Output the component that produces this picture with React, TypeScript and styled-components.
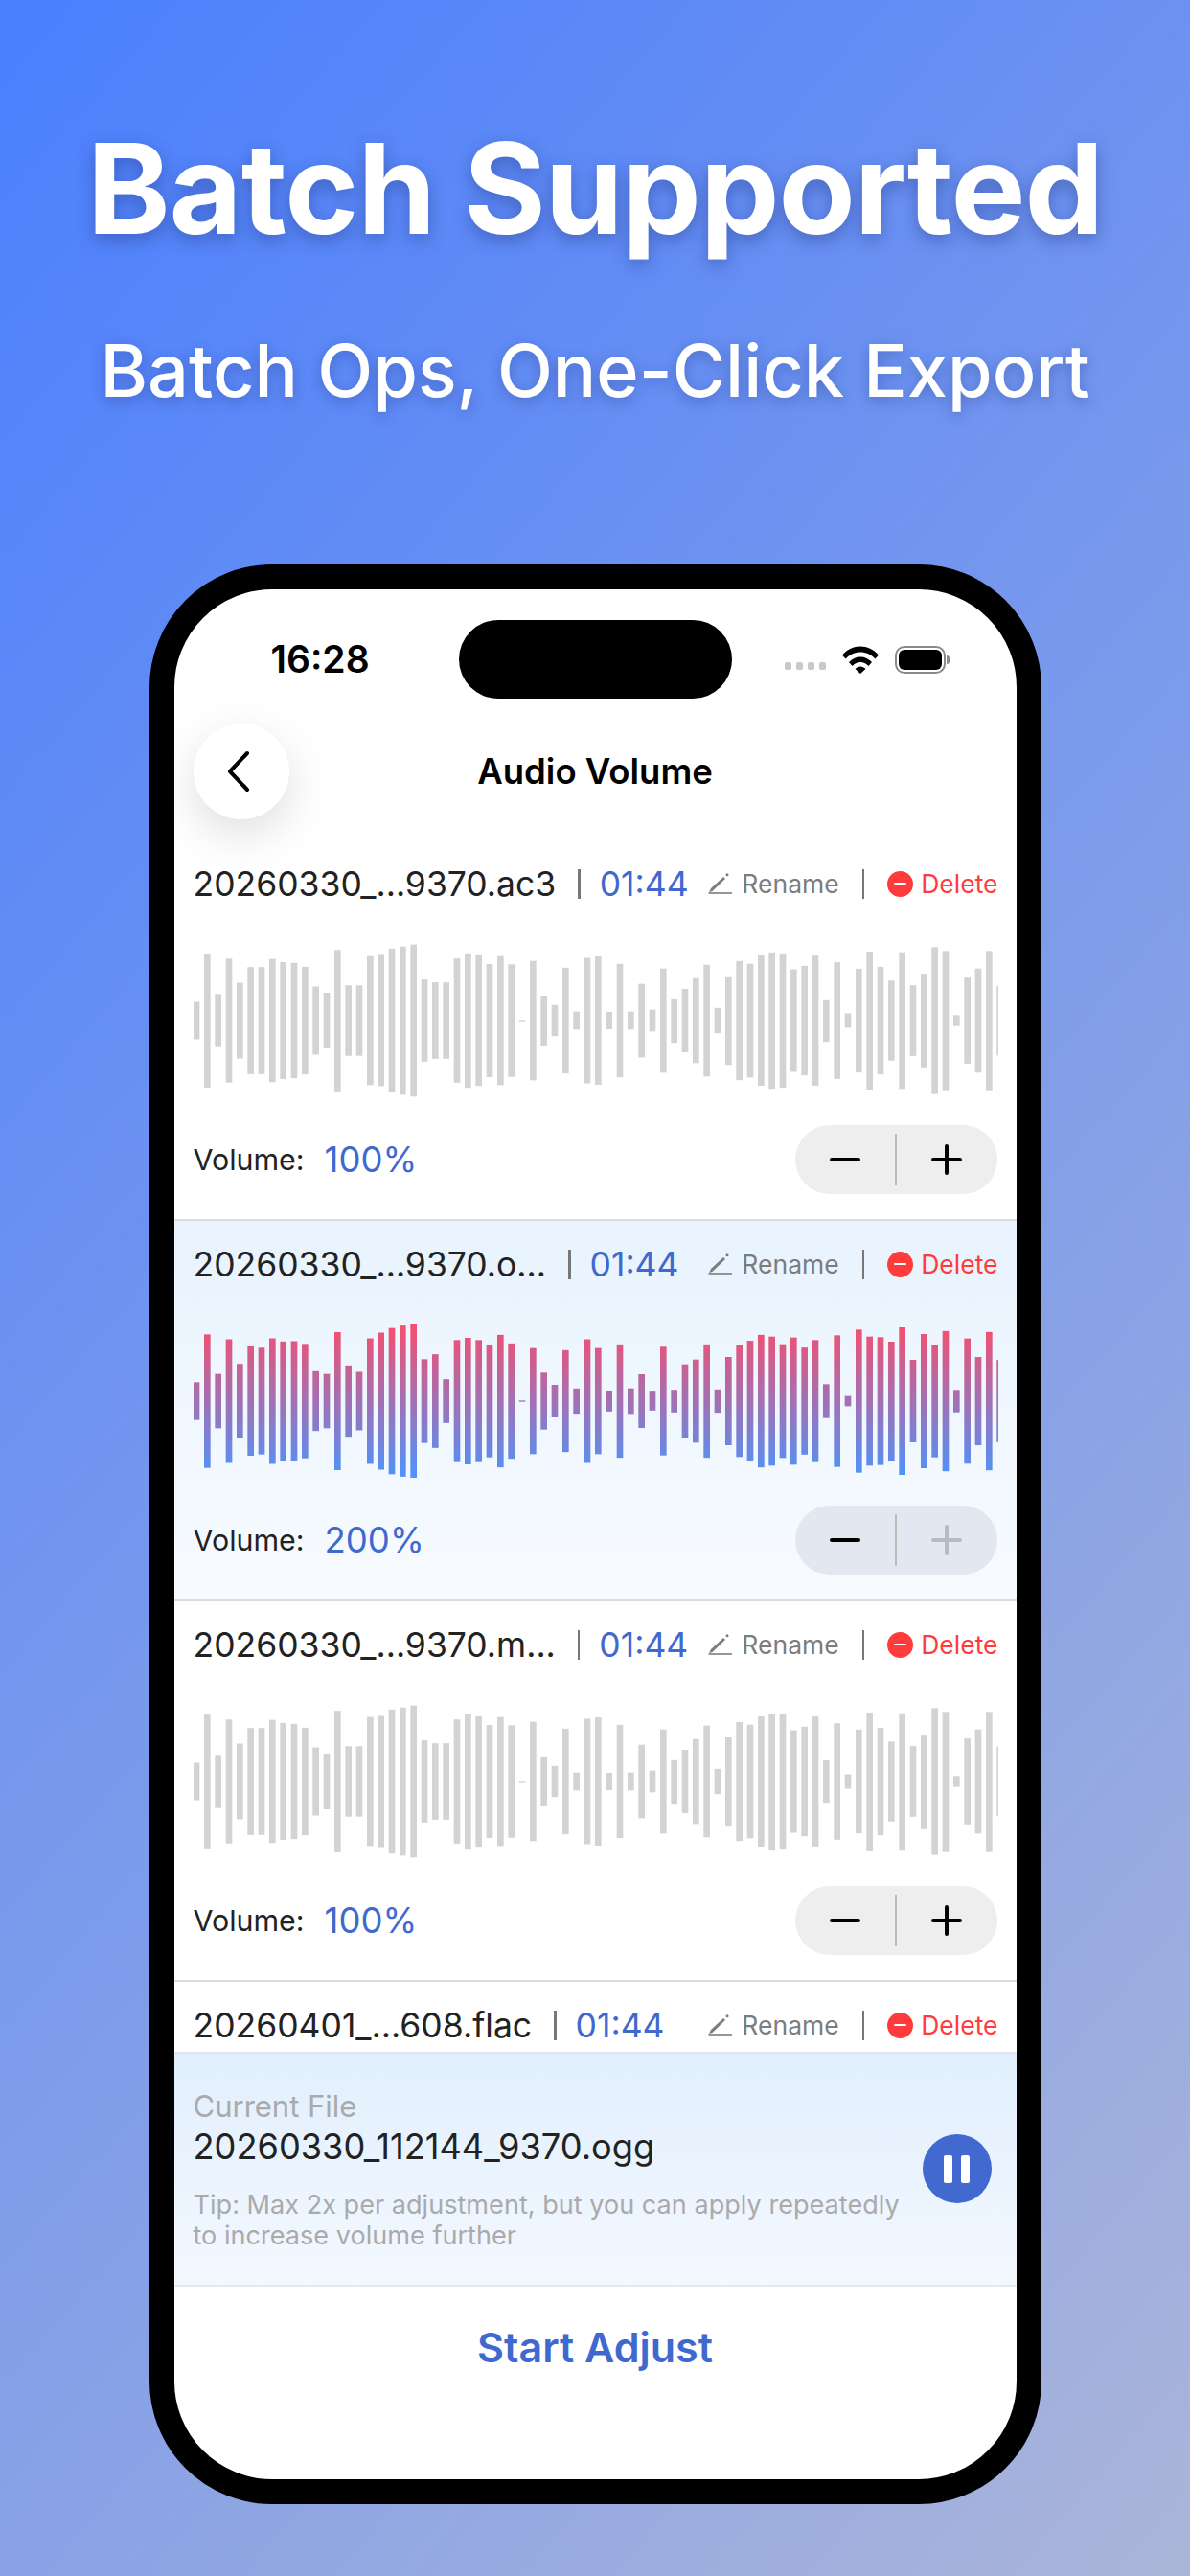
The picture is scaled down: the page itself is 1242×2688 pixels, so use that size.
import React from 'react'
import styled, {createGlobalStyle} from 'styled-components'

const GRAY_BARS = [
    117, 419, 166, 388, 237, 335, 335, 386, 366, 361, 337, 213, 174, 443, 220, 220, 404, 411, 451, 464, 476, 257, 239, 239, 389,
    421, 409, 354, 404, 352, 4, 374, 156, 97, 331, 56, 393, 402, 54, 355, 56, 230, 68, 326, 139, 198, 266, 350, 79, 277,
    373, 356, 408, 427, 421, 321, 343, 407, 133, 365, 45, 325, 432, 337, 250, 428, 221, 293, 460, 436, 34, 269, 326, 436, 218,
]

const ACTIVE_BARS = [
    118, 418, 170, 387, 233, 342, 334, 393, 373, 375, 358, 187, 170, 432, 223, 183, 393, 429, 458, 473, 480, 262, 293, 137, 382,
    396, 382, 352, 415, 361, 4, 332, 178, 102, 319, 79, 387, 332, 65, 355, 80, 168, 59, 340, 71, 230, 260, 355, 73, 276,
    350, 378, 415, 404, 356, 398, 335, 382, 106, 412, 32, 448, 404, 400, 372, 462, 258, 420, 352, 439, 70, 392, 276, 433, 257,
]

interface IAudioFile {
    name: string
    duration: string
    volume: number
    active?: boolean
    partial?: boolean
}

const FILES: IAudioFile[] = [
    {name: '20260330_...9370.ac3', duration: '01:44', volume: 100},
    {name: '20260330_...9370.o...', duration: '01:44', volume: 200, active: true},
    {name: '20260330_...9370.m...', duration: '01:44', volume: 100},
    {name: '20260401_...608.flac', duration: '01:44', volume: 100, partial: true},
]

const GlobalStyle = createGlobalStyle`
    html, body {
        margin: 0;
        padding: 0;
    }

    body {
        font-family: Inter, "Liberation Sans", sans-serif;
    }
`

const Page = styled.div`
    width: 1242px;
    height: 2688px;
    box-sizing: border-box;
    padding-top: 126px;
    display: flex;
    flex-direction: column;
    align-items: center;
    overflow: hidden;
    background: linear-gradient(131deg, #4a7ffe 0%, #abb5d9 100%);
`

const Headline = styled.h1`
    margin: 0;
    height: 142px;
    line-height: 142px;
    font-size: 131px;
    font-weight: 700;
    letter-spacing: -1px;
    color: #fff;
    white-space: nowrap;
    text-shadow: 0 6px 18px rgba(35, 55, 130, 0.45);
`

const Subhead = styled.h2`
    margin: 73px 0 0;
    height: 92px;
    line-height: 92px;
    font-size: 75.6px;
    font-weight: 500;
    color: #fff;
    white-space: nowrap;
    text-shadow: 0 4px 14px rgba(35, 55, 130, 0.4);
`

const Phone = styled.div`
    margin-top: 156px;
    width: 931px;
    height: 2024px;
    box-sizing: border-box;
    border: 26px solid #000;
    border-radius: 128px;
    background: #fff;
    overflow: hidden;
    display: flex;
    flex-direction: column;
`

const StatusBar = styled.div`
    flex: none;
    height: 140px;
    box-sizing: border-box;
    padding-top: 32px;
    display: grid;
    grid-template-columns: 1fr 285px 1fr;
    align-items: start;
`

const Clock = styled.div`
    padding-left: 101px;
    height: 82px;
    line-height: 82px;
    font-size: 39px;
    font-weight: 600;
    color: #000;
`

const Island = styled.div`
    height: 82px;
    border-radius: 41px;
    background: #000;
`

const StatusIcons = styled.div`
    height: 82px;
    display: flex;
    align-items: center;
    padding-left: 55px;
`

const SignalDots = styled.div`
    display: flex;
    gap: 5px;
    margin: 14px 17px 0 0;
`

const SignalDot = styled.span`
    width: 7px;
    height: 8px;
    border-radius: 2px;
    background: #c9c9c9;
`

const Battery = styled.div`
    position: relative;
    margin-left: 17px;
    width: 53px;
    height: 29px;
    box-sizing: border-box;
    border: 2px solid #8a8a8a;
    border-radius: 10px;
    padding: 2px;

    &::before {
        content: '';
        display: block;
        height: 100%;
        border-radius: 6px;
        background: #000;
    }

    &::after {
        content: '';
        position: absolute;
        right: -6px;
        top: 8px;
        width: 3px;
        height: 9px;
        border-radius: 0 3px 3px 0;
        background: #8a8a8a;
    }
`

const NavBar = styled.div`
    flex: none;
    position: relative;
    z-index: 2;
    height: 100px;
    margin-bottom: 22px;
    padding: 0 20px;
    display: grid;
    grid-template-columns: 100px 1fr 100px;
    align-items: center;
`

const BackButton = styled.button`
    width: 100px;
    height: 100px;
    padding: 0 5px 0 0;
    border: 0;
    border-radius: 50%;
    background: #fff;
    box-shadow: 0 16px 48px rgba(0, 0, 0, 0.13);
    display: flex;
    align-items: center;
    justify-content: center;
`

const NavTitle = styled.div`
    text-align: center;
    font-size: 36.5px;
    font-weight: 600;
    color: #000;
`

const FileList = styled.div`
    flex: 1;
    min-height: 0;
    overflow: hidden;
`

const Row = styled.div<{ $active?: boolean }>`
    height: 397px;
    box-sizing: border-box;
    padding: 23px 20px 0;
    border-bottom: 2px solid #dcdcdc;
    background: ${({$active}) => ($active ? 'linear-gradient(180deg, #e8f3fe 0%, #f8fbff 100%)' : '#fff')};
`

const RowHeader = styled.div`
    height: 44px;
    margin-right: -1px;
    display: flex;
    align-items: center;
`

const FileName = styled.span`
    font-size: 35.5px;
    color: #222;
    white-space: nowrap;
`

const Duration = styled.span`
    font-size: 35.5px;
    color: #3f69cf;
`

const Pipe = styled.span<{ $before: number; $after: number }>`
    flex: none;
    width: 2.5px;
    height: 31px;
    margin: 0 ${({$after}) => $after}px 0 ${({$before}) => $before}px;
    background: #777;
`

const Actions = styled.div`
    margin-left: auto;
    display: flex;
    align-items: center;
`

const ActionText = styled.span<{ $danger?: boolean }>`
    font-size: 26.5px;
    color: ${({$danger}) => ($danger ? '#ff3b3b' : '#7c7c7c')};
`

const RenameGroup = styled.div`
    display: flex;
    align-items: center;
    gap: 9px;
`

const DeleteGroup = styled.div`
    display: flex;
    align-items: center;
    gap: 8px;
`

const DeleteDot = styled.span`
    width: 27px;
    height: 27px;
    border-radius: 50%;
    background: #ff3b3b;
    display: flex;
    align-items: center;
    justify-content: center;

    &::before {
        content: '';
        width: 13px;
        height: 2.5px;
        border-radius: 1px;
        background: #fff;
    }
`

const Wave = styled.svg`
    display: block;
    margin-top: 36px;
    width: 840px;
    height: 170px;
`

const VolumeRow = styled.div`
    margin-top: 24px;
    height: 72px;
    display: flex;
    align-items: center;
`

const VolumeLabel = styled.span`
    font-size: 30.4px;
    color: #222;
`

const VolumeValue = styled.span`
    margin-left: 21px;
    font-size: 36.5px;
    color: #3f69cf;
`

const Stepper = styled.div<{ $active?: boolean }>`
    margin-left: auto;
    width: 211px;
    height: 72px;
    border-radius: 36px;
    background: ${({$active}) => ($active ? '#e3e7ef' : '#eeeeee')};
    display: flex;
    align-items: center;
`

const StepButton = styled.div`
    flex: 1;
    display: flex;
    align-items: center;
    justify-content: center;
`

const StepDivider = styled.span`
    flex: none;
    width: 2px;
    height: 54px;
    background: #bbbbbb;
`

const NowPlaying = styled.div`
    flex: none;
    position: relative;
    height: 245px;
    box-sizing: border-box;
    padding: 35px 20px 0;
    border-top: 2px solid #dbe6f1;
    border-bottom: 2px solid #e6e8eb;
    background: linear-gradient(180deg, #e1effd 0%, #f3f8ff 100%);
`

const CurrentLabel = styled.div`
    height: 40px;
    line-height: 40px;
    font-size: 31px;
    color: #aaaaaa;
`

const CurrentName = styled.div`
    height: 44px;
    line-height: 44px;
    font-size: 36.2px;
    color: #222;
`

const Tip = styled.div`
    margin-top: 23px;
    width: 760px;
    font-size: 27.1px;
    line-height: 32px;
    color: #aaaaaa;
`

const PauseButton = styled.button`
    position: absolute;
    right: 26px;
    top: 84px;
    width: 72px;
    height: 72px;
    padding: 0;
    border: 0;
    border-radius: 50%;
    background: #4169cf;
    display: flex;
    align-items: center;
    justify-content: center;
    gap: 9px;
`

const PauseBar = styled.span`
    width: 9px;
    height: 29px;
    border-radius: 2px;
    background: #fff;
`

const BottomBar = styled.div`
    flex: none;
    height: 201px;
    box-sizing: border-box;
    padding-top: 31px;
    text-align: center;
    font-size: 43px;
    line-height: 64px;
    font-weight: 600;
    color: #3f69cf;
`

const Waveform: React.FC<{ bars: number[]; active?: boolean; id: string }> = ({bars, active, id}) => (
    <Wave viewBox="0 0 840 170">
        <defs>
            <linearGradient id={id} gradientUnits="userSpaceOnUse" x1="0" y1="5" x2="0" y2="165">
                <stop offset="0" stopColor="#f83c5c"/>
                <stop offset="1" stopColor="#3a89fb"/>
            </linearGradient>
        </defs>
        {bars.map((h, i) => (
            <rect
                key={i}
                x={i * 11.333 - 0.33}
                y={85 - h / 6}
                width={6.67}
                height={h / 3}
                fill={active ? `url(#${id})` : '#d3d3d5'}
                fillOpacity={active ? 0.9 : 1}
            />
        ))}
    </Wave>
)

const PencilIcon = () => (
    <svg width="26" height="22" viewBox="0 0 26 22">
        <path d="M0.5 21h24.5" stroke="#7c7c7c" strokeWidth="1.6"/>
        <path d="M1 20.5 L3 16 L16 4 L18 6 L5 18.5 Z" fill="#7c7c7c"/>
        <circle cx="20" cy="1.8" r="1.5" fill="#7c7c7c"/>
    </svg>
)

const StepIcon: React.FC<{ plus?: boolean; color: string }> = ({plus, color}) => (
    <svg width="32" height="32" viewBox="0 0 32 32">
        <path d="M2 16h28" stroke={color} strokeWidth="4" strokeLinecap="round"/>
        {plus && <path d="M16 2v28" stroke={color} strokeWidth="4" strokeLinecap="round"/>}
    </svg>
)

const WifiIcon = () => (
    <svg width="38" height="29" viewBox="0 0 38 29">
        <path d="M0 9.5 C10.5 -2.5 27.5 -2.5 38 9.5 L34.5 13.5 C26 4 12 4 3.5 13.5 Z" fill="#000"/>
        <path d="M7 17 C13.5 9.5 24.5 9.5 31 17 L27.5 21 C22.5 15.5 15.5 15.5 10.5 21 Z" fill="#000"/>
        <path d="M13.5 24 C16.5 20.5 21.5 20.5 24.5 24 L19 29 Z" fill="#000"/>
    </svg>
)

const App: React.FC = () => (
    <Page>
        <GlobalStyle/>
        <Headline>Batch Supported</Headline>
        <Subhead>Batch Ops, One-Click Export</Subhead>
        <Phone>
            <StatusBar>
                <Clock>16:28</Clock>
                <Island/>
                <StatusIcons>
                    <SignalDots>
                        <SignalDot/>
                        <SignalDot/>
                        <SignalDot/>
                        <SignalDot/>
                    </SignalDots>
                    <WifiIcon/>
                    <Battery/>
                </StatusIcons>
            </StatusBar>
            <NavBar>
                <BackButton>
                    <svg width="24" height="44" viewBox="0 0 24 44">
                        <path d="M21 3 L3 22 L21 41" fill="none" stroke="#000" strokeWidth="4" strokeLinecap="round" strokeLinejoin="round"/>
                    </svg>
                </BackButton>
                <NavTitle>Audio Volume</NavTitle>
            </NavBar>
            <FileList>
                {FILES.map((file, index) => (
                    <Row key={index} $active={file.active}>
                        <RowHeader>
                            <FileName>{file.name}</FileName>
                            <Pipe $before={23} $after={20}/>
                            <Duration>{file.duration}</Duration>
                            <Actions>
                                <RenameGroup>
                                    <PencilIcon/>
                                    <ActionText>Rename</ActionText>
                                </RenameGroup>
                                <Pipe $before={24} $after={24}/>
                                <DeleteGroup>
                                    <DeleteDot/>
                                    <ActionText $danger>Delete</ActionText>
                                </DeleteGroup>
                            </Actions>
                        </RowHeader>
                        {!file.partial && (
                            <>
                                <Waveform
                                    id={`wave-${index}`}
                                    bars={file.active ? ACTIVE_BARS : GRAY_BARS}
                                    active={file.active}
                                />
                                <VolumeRow>
                                    <VolumeLabel>Volume:</VolumeLabel>
                                    <VolumeValue>{file.volume}%</VolumeValue>
                                    <Stepper $active={file.active}>
                                        <StepButton>
                                            <StepIcon color="#000"/>
                                        </StepButton>
                                        <StepDivider/>
                                        <StepButton>
                                            <StepIcon plus color={file.active ? '#b5bac4' : '#000'}/>
                                        </StepButton>
                                    </Stepper>
                                </VolumeRow>
                            </>
                        )}
                    </Row>
                ))}
            </FileList>
            <NowPlaying>
                <CurrentLabel>Current File</CurrentLabel>
                <CurrentName>20260330_112144_9370.ogg</CurrentName>
                <Tip>Tip: Max 2x per adjustment, but you can apply repeatedly to increase volume further</Tip>
                <PauseButton>
                    <PauseBar/>
                    <PauseBar/>
                </PauseButton>
            </NowPlaying>
            <BottomBar>Start Adjust</BottomBar>
        </Phone>
    </Page>
)

export default App
